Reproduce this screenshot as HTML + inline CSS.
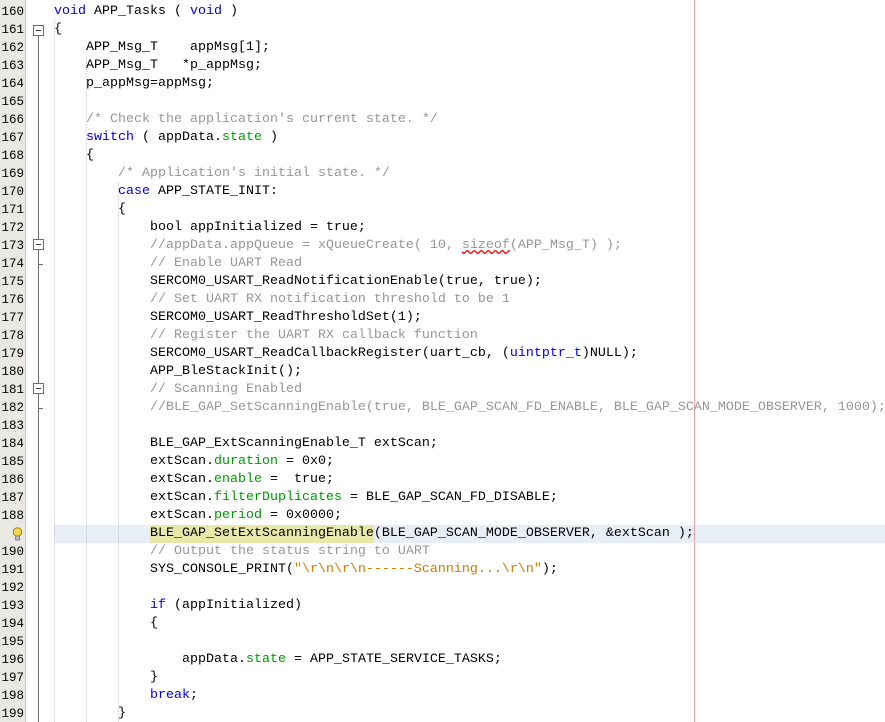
<!DOCTYPE html>
<html><head><meta charset="utf-8"><style>
*{margin:0;padding:0}
html,body{width:885px;height:722px;overflow:hidden}
body{background:#fff;position:relative;font-family:"Liberation Mono",monospace;font-size:13.33px;color:#000}
.g{position:absolute;left:0;top:0;width:25px;height:722px;background:#e9e8e2;border-right:1px solid #c8c8c0}
.n{position:absolute;left:0;width:24px;text-align:right;height:18px;line-height:18px;font-size:12.5px;color:#000}
.l{position:absolute;left:54px;height:18px;line-height:18px;white-space:pre}
.k{color:#0000e6}.c{color:#969696}.f{color:#009900}.s{color:#ce7b00}
.guide{position:absolute;top:21px;height:701px;border-left:1px dotted #c8c8c8}
.fold{position:absolute;left:38px;width:1px;background:#6d6d6d}
.box{position:absolute;left:33px;width:9px;height:9px;border:1px solid #6d6d6d;background:#fff}
.box:after{content:"";position:absolute;left:2px;top:4px;width:5px;height:1px;background:#333}
.tick{position:absolute;left:38px;width:5px;height:1px;background:#6d6d6d}
</style></head><body>
<div class="g"></div>
<div style="position:absolute;left:54px;top:525px;width:831px;height:18px;background:#e8eef8"></div>
<div style="position:absolute;left:150px;top:525px;width:224px;height:18px;background:#e8e8a8"></div>
<div class="guide" style="left:54px"></div>
<div class="guide" style="left:86px;top:57px;height:665px"></div>
<div class="guide" style="left:118px;top:183px;height:539px"></div>
<div style="position:absolute;left:694px;top:0;width:1px;height:722px;background:#f4a0a0"></div>
<div class="fold" style="top:35px;height:687px"></div>
<div class="box" style="top:25px"></div>
<div class="box" style="top:239px"></div>
<div class="tick" style="top:264px"></div>
<div class="box" style="top:383px"></div>
<div class="tick" style="top:408px"></div>
<svg style="position:absolute;left:12px;top:527px" width="11" height="14" viewBox="0 0 11 14"><circle cx="5.5" cy="5" r="4.3" fill="#f6d84a" stroke="#a08020"/><rect x="3.5" y="9" width="4" height="4" fill="#bbb" stroke="#777" stroke-width=".8"/></svg>
<div id="c"></div>
<script>
var L=[
'<span class="k">void</span> APP_Tasks ( <span class="k">void</span> )',
'{',
'    APP_Msg_T    appMsg[1];',
'    APP_Msg_T   *p_appMsg;',
'    p_appMsg=appMsg;',
'',
'    <span class="c">/* Check the application\'s current state. */</span>',
'    <span class="k">switch</span> ( appData.<span class="f">state</span> )',
'    {',
'        <span class="c">/* Application\'s initial state. */</span>',
'        <span class="k">case</span> APP_STATE_INIT:',
'        {',
'            bool appInitialized = true;',
'            <span class="c">//appData.appQueue = xQueueCreate( 10, <u style="text-decoration-color:red;text-decoration-style:wavy">sizeof</u>(APP_Msg_T) );</span>',
'            <span class="c">// Enable UART Read</span>',
'            SERCOM0_USART_ReadNotificationEnable(true, true);',
'            <span class="c">// Set UART RX notification threshold to be 1</span>',
'            SERCOM0_USART_ReadThresholdSet(1);',
'            <span class="c">// Register the UART RX callback function</span>',
'            SERCOM0_USART_ReadCallbackRegister(uart_cb, (<span class="k">uintptr_t</span>)NULL);',
'            APP_BleStackInit();',
'            <span class="c">// Scanning Enabled</span>',
'            <span class="c">//BLE_GAP_SetScanningEnable(true, BLE_GAP_SCAN_FD_ENABLE, BLE_GAP_SCAN_MODE_OBSERVER, 1000);</span>',
'',
'            BLE_GAP_ExtScanningEnable_T extScan;',
'            extScan.<span class="f">duration</span> = 0x0;',
'            extScan.<span class="f">enable</span> =  true;',
'            extScan.<span class="f">filterDuplicates</span> = BLE_GAP_SCAN_FD_DISABLE;',
'            extScan.<span class="f">period</span> = 0x0000;',
'            BLE_GAP_SetExtScanningEnable(BLE_GAP_SCAN_MODE_OBSERVER, &amp;extScan );',
'            <span class="c">// Output the status string to UART</span>',
'            SYS_CONSOLE_PRINT(<span class="s">"\\r\\n\\r\\n------Scanning...\\r\\n"</span>);',
'',
'            <span class="k">if</span> (appInitialized)',
'            {',
'',
'                appData.<span class="f">state</span> = APP_STATE_SERVICE_TASKS;',
'            }',
'            <span class="k">break</span>;',
'        }'
];
var h='';
for(var i=0;i<L.length;i++){var t=3+i*18;
h+='<div class="n" style="top:'+t+'px">'+(i==29?'':(160+i))+'</div>';
h+='<div class="l" style="top:'+t+'px">'+L[i]+'</div>';}
document.getElementById('c').innerHTML=h;
</script>
</body></html>
